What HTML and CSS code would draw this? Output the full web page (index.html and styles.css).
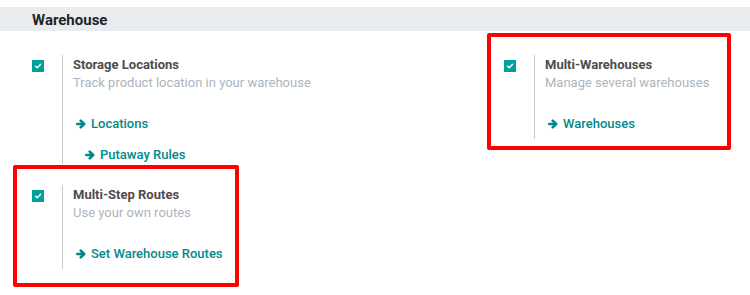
FILE: index.html
```html
<!DOCTYPE html>
<html>
<head>
<meta charset="utf-8">
<link rel="stylesheet" href="styles.css">
</head>
<body>
<div class="page">
  <h2 class="section-title">Warehouse</h2>
  <div class="settings">
    <div class="col">
      <div class="setting">
        <div class="left-pane"><span class="checkbox"><svg viewBox="0 0 12 12" width="12" height="12"><path d="M3.6 6.3 L5.2 7.7 L8.4 4.4" fill="none" stroke="#fff" stroke-width="1.5" stroke-linecap="round" stroke-linejoin="round"/></svg></span></div>
        <div class="right-pane double">
          <div class="label">Storage Locations</div>
          <div class="desc">Track product location in your warehouse</div>
          <div class="links">
            <a class="link link-a"><svg class="arrow" viewBox="0 0 10 10" width="10" height="10"><path d="M1.2 5 H7.4 M4.7 1.6 L8.2 5 L4.7 8.4" fill="none" stroke="currentColor" stroke-width="2.6" stroke-linecap="round" stroke-linejoin="round"/></svg>Locations</a>
            <a class="link link-b"><svg class="arrow" viewBox="0 0 10 10" width="10" height="10"><path d="M1.2 5 H7.4 M4.7 1.6 L8.2 5 L4.7 8.4" fill="none" stroke="currentColor" stroke-width="2.6" stroke-linecap="round" stroke-linejoin="round"/></svg>Putaway Rules</a>
          </div>
        </div>
      </div>
      <div class="setting mark-left">
        <div class="left-pane"><span class="checkbox"><svg viewBox="0 0 12 12" width="12" height="12"><path d="M3.6 6.3 L5.2 7.7 L8.4 4.4" fill="none" stroke="#fff" stroke-width="1.5" stroke-linecap="round" stroke-linejoin="round"/></svg></span></div>
        <div class="right-pane single">
          <div class="label">Multi-Step Routes</div>
          <div class="desc">Use your own routes</div>
          <div class="links">
            <a class="link link-a"><svg class="arrow" viewBox="0 0 10 10" width="10" height="10"><path d="M1.2 5 H7.4 M4.7 1.6 L8.2 5 L4.7 8.4" fill="none" stroke="currentColor" stroke-width="2.6" stroke-linecap="round" stroke-linejoin="round"/></svg>Set Warehouse Routes</a>
          </div>
        </div>
      </div>
    </div>
    <div class="col">
      <div class="setting mark-right">
        <div class="left-pane"><span class="checkbox"><svg viewBox="0 0 12 12" width="12" height="12"><path d="M3.6 6.3 L5.2 7.7 L8.4 4.4" fill="none" stroke="#fff" stroke-width="1.5" stroke-linecap="round" stroke-linejoin="round"/></svg></span></div>
        <div class="right-pane single">
          <div class="label">Multi-Warehouses</div>
          <div class="desc">Manage several warehouses</div>
          <div class="links">
            <a class="link link-a"><svg class="arrow" viewBox="0 0 10 10" width="10" height="10"><path d="M1.2 5 H7.4 M4.7 1.6 L8.2 5 L4.7 8.4" fill="none" stroke="currentColor" stroke-width="2.6" stroke-linecap="round" stroke-linejoin="round"/></svg>Warehouses</a>
          </div>
        </div>
      </div>
    </div>
  </div>
</div>
</body>
</html>
```

FILE: styles.css
```css
html, body {
  margin: 0;
  padding: 0;
  background: #fff;
}
body {
  font-family: Roboto, "Liberation Sans", sans-serif;
  font-size: 13px;
  color: #4c4c4c;
}
.page {
  padding: 7px 0 0;
  min-height: 295px;
  box-sizing: border-box;
}
.section-title {
  margin: 0;
  height: 24px;
  box-sizing: border-box;
  padding: 2px 0 0 32px;
  line-height: 22px;
  font-size: 15px;
  font-weight: 700;
  color: #212529;
  background: #e9ecef;
}
.settings {
  display: grid;
  grid-template-columns: 472px 1fr;
  padding: 24px 0 0 16px;
}
.col {
  display: flex;
  flex-direction: column;
  gap: 21px;
}
.setting {
  position: relative;
  display: flex;
  padding-left: 16px;
}
.left-pane {
  width: 30px;
  flex: none;
}
.checkbox {
  display: block;
  width: 12px;
  height: 12px;
  margin-top: 5px;
  background: #00a09d;
}
.checkbox svg {
  display: block;
}
.right-pane {
  border-left: 1px solid #c9c9c9;
  padding: 1px 0 1px 10px;
  line-height: 18px;
}
.right-pane.single {
  padding-bottom: 6px;
}
.right-pane.double {
  padding-bottom: 0;
}
.label {
  font-weight: 700;
  color: #4c4c4c;
}
.desc {
  color: #adb5bd;
}
.links {
  margin-top: 23px;
  display: flex;
  flex-direction: column;
  gap: 10px;
}
.double .links {
  gap: 13px;
}
.link {
  display: flex;
  align-items: center;
  color: #00898a;
  font-weight: 500;
}
.link-a {
  padding-left: 3px;
}
.link-b {
  padding-left: 12px;
}
.arrow {
  display: block;
  margin-right: 5px;
  flex: none;
}
.mark-left::after,
.mark-right::after {
  content: "";
  position: absolute;
  border: 4px solid #ff0000;
  border-radius: 2px;
  box-sizing: border-box;
  pointer-events: none;
}
.mark-left::after {
  left: -3px;
  top: -20px;
  width: 226px;
  height: 122px;
}
.mark-right::after {
  left: -1px;
  top: -22px;
  width: 244px;
  height: 117px;
}
```
